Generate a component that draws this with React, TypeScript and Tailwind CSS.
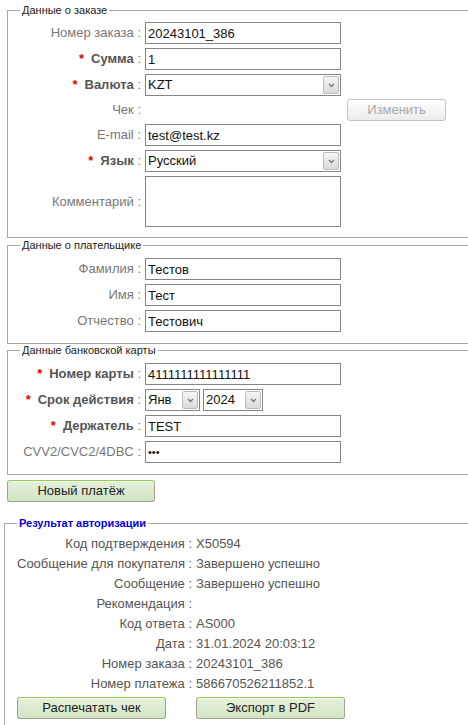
import type { ReactNode } from "react";

// Payment form result page: three form fieldsets and the authorization result block.

const FONT = "font-['Liberation_Sans',Arial,sans-serif]";

function Legend({ children, blue }: { children: ReactNode; blue?: boolean }) {
  return (
    <legend
      className={
        blue
          ? "px-[2px] text-[11px] leading-[13px] font-bold text-[#0000e6]"
          : "px-[2px] text-[11px] leading-[13px] text-[#222]"
      }
    >
      {children}
    </legend>
  );
}

function Label({ text, bold, required }: { text: string; bold?: boolean; required?: boolean }) {
  return (
    <div className="w-[121px] shrink-0 text-right text-[13px] leading-[16px] whitespace-nowrap text-[#777]">
      {required && <span className="mr-[7px] font-bold text-[#e00000]">*</span>}
      <span className={bold ? "font-bold text-[#555]" : ""}>{text}</span>
      <span> :</span>
    </div>
  );
}

function Row({
  children,
  className = "",
  ...label
}: {
  text: string;
  bold?: boolean;
  required?: boolean;
  className?: string;
  children?: ReactNode;
}) {
  return (
    <div className={`flex items-center gap-[4px] ${className}`}>
      <Label {...label} />
      {children}
    </div>
  );
}

function TextBox({ value, w = "w-[196px]" }: { value: string; w?: string }) {
  return (
    <input
      readOnly
      value={value}
      className={`${w} h-[22px] border border-[#858585] bg-white px-[2px] text-[13px] text-[#111] outline-none ${FONT}`}
    />
  );
}

function Chevron() {
  return (
    <svg width="7" height="5" viewBox="0 0 7 5" className="block">
      <path d="M1 1l2.5 2.5L6 1" fill="none" stroke="#777" strokeWidth="1.3" />
    </svg>
  );
}

function SelectBox({ value, w }: { value: string; w: string }) {
  return (
    <div className={`${w} flex h-[22px] items-stretch border border-[#858585] bg-white`}>
      <div className="flex-1 truncate px-[2px] text-[13px] leading-[20px] text-[#111]">{value}</div>
      <div className="m-[1px] flex w-[16px] items-center justify-center rounded-[2px] border border-[#bcbcbc] bg-gradient-to-b from-[#f6f6f6] to-[#dadada]">
        <Chevron />
      </div>
    </div>
  );
}

function GreenButton({ children, w }: { children: ReactNode; w: string }) {
  return (
    <button
      type="button"
      className={`${w} h-[22px] rounded-[3px] border border-[#9aa68f] border-t-[#8fd14f] bg-gradient-to-b from-[#e6f0dc] to-[#d3e4c3] text-[13px] leading-[20px] text-[#222] shadow-[inset_0_1px_0_#f4faee] ${FONT}`}
    >
      {children}
    </button>
  );
}

const results: [string, string][] = [
  ["Код подтверждения", "X50594"],
  ["Сообщение для покупателя", "Завершено успешно"],
  ["Сообщение", "Завершено успешно"],
  ["Рекомендация", ""],
  ["Код ответа", "AS000"],
  ["Дата", "31.01.2024 20:03:12"],
  ["Номер заказа", "20243101_386"],
  ["Номер платежа", "586670526211852.1"],
];

export default function App() {
  return (
    <div className={`h-[725px] w-[468px] overflow-hidden bg-white ${FONT}`}>
      <fieldset className="mt-[4px] ml-[7px] border border-r-0 border-[#a8a8a8] pr-0 pb-[10px] pl-[12px]">
        <Legend>Данные о заказе</Legend>
        <div className="flex flex-col gap-[4px] pt-[5px]">
          <Row text="Номер заказа">
            <TextBox value="20243101_386" />
          </Row>
          <Row text="Сумма" bold required>
            <TextBox value="1" />
          </Row>
          <Row text="Валюта" bold required>
            <SelectBox value="KZT" w="w-[196px]" />
          </Row>
          <Row text="Чек" className="-mt-[1px]">
            <div className="w-[196px] shrink-0" />
            <button
              type="button"
              className={`ml-[2px] h-[22px] w-[99px] rounded-[3px] border border-[#c4c4c4] bg-gradient-to-b from-white to-[#ececec] text-[13px] text-[#a8a8a8] ${FONT}`}
            >
              Изменить
            </button>
          </Row>
          <Row text="E-mail" className="-mt-[1px]">
            <TextBox value="test@test.kz" />
          </Row>
          <Row text="Язык" bold required>
            <SelectBox value="Русский" w="w-[196px]" />
          </Row>
          <Row text="Комментарий">
            <textarea readOnly className="h-[51px] w-[196px] resize-none border border-[#858585] bg-white outline-none" />
          </Row>
        </div>
      </fieldset>

      <fieldset className="mt-[1px] ml-[7px] border border-r-0 border-[#a8a8a8] pb-[11px] pl-[12px]">
        <Legend>Данные о плательщике</Legend>
        <div className="flex flex-col gap-[4px] pt-[6px]">
          <Row text="Фамилия">
            <TextBox value="Тестов" />
          </Row>
          <Row text="Имя">
            <TextBox value="Тест" />
          </Row>
          <Row text="Отчество">
            <TextBox value="Тестович" />
          </Row>
        </div>
      </fieldset>

      <fieldset className="ml-[7px] border border-r-0 border-[#a8a8a8] pb-[11px] pl-[12px]">
        <Legend>Данные банковской карты</Legend>
        <div className="flex flex-col gap-[4px] pt-[6px]">
          <Row text="Номер карты" bold required>
            <TextBox value="4111111111111111" />
          </Row>
          <Row text="Срок действия" bold required>
            <div className="flex gap-[3px]">
              <SelectBox value="Янв" w="w-[55px]" />
              <SelectBox value="2024" w="w-[60px]" />
            </div>
          </Row>
          <Row text="Держатель" bold required>
            <TextBox value="TEST" />
          </Row>
          <Row text="CVV2/CVC2/4DBC">
            <div className="flex h-[22px] w-[196px] items-center border border-[#858585] bg-white px-[2px] text-[11px] leading-[20px] text-[#111]">
              •••
            </div>
          </Row>
        </div>
      </fieldset>

      <div className="mt-[3px] ml-[7px]">
        <GreenButton w="w-[148px]">Новый платёж</GreenButton>
      </div>

      <fieldset className="mt-[15px] ml-[4px] h-[220px] border border-r-0 border-b-0 border-[#a8a8a8] pl-[12px]">
        <Legend blue>Результат авторизации</Legend>
        <div className="pt-[4px] text-[13px] leading-[20px] text-[#555]">
          {results.map(([k, v]) => (
            <div key={k} className="flex">
              <div className="w-[175px] shrink-0 text-right whitespace-nowrap">{k} :</div>
              <div className="ml-[4px] whitespace-nowrap">{v}</div>
            </div>
          ))}
          <div className="mt-[3px] flex gap-[30px]">
            <GreenButton w="w-[149px]">Распечатать чек</GreenButton>
            <GreenButton w="w-[149px]">Экспорт в PDF</GreenButton>
          </div>
        </div>
      </fieldset>
    </div>
  );
}
